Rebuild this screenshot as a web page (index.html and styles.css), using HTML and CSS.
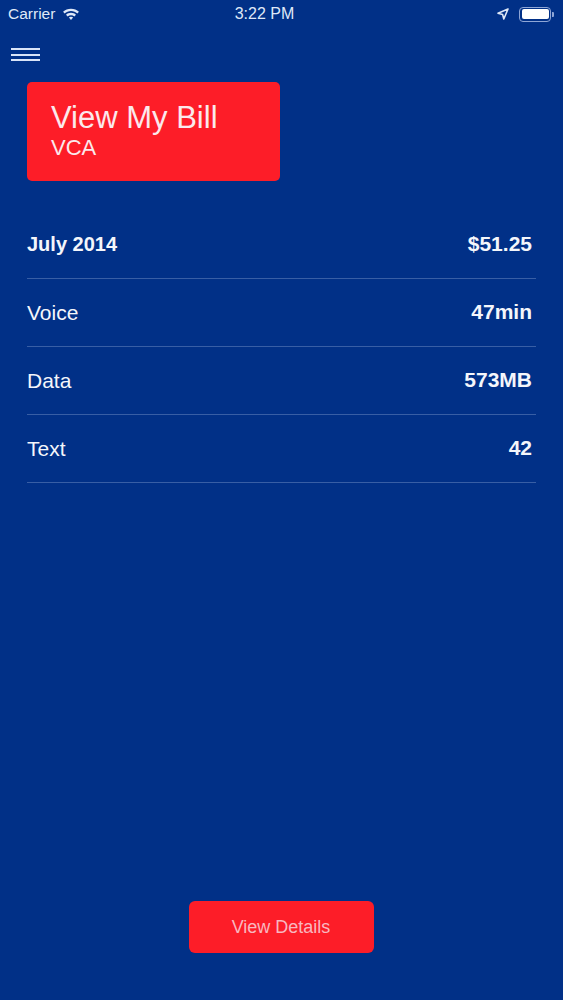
FILE: index.html
```html
<!DOCTYPE html>
<html lang="en">
<head>
  <meta charset="UTF-8" />
  <meta name="viewport" content="width=device-width, initial-scale=1.0" />
  <title>View My Bill</title>
  <link rel="stylesheet" href="styles.css">
</head>
<body>
  <div class="screen">
    <div class="status-bar">
      <div class="status-left">
        Carrier
        <svg class="wifi" width="18" height="14" viewBox="0 0 17 13">
          <path d="M8.5 1.5C5.5 1.5 3 2.6 1 4.4l1.5 1.6C4.1 4.6 6.2 3.7 8.5 3.7s4.4 .9 6 2.3L16 4.4C14 2.6 11.5 1.5 8.5 1.5z" fill="#dfe8f7"/>
          <path d="M8.5 5.4c-1.9 0-3.5 .7-4.7 1.8l1.5 1.6c.9-.8 2-1.2 3.2-1.2s2.3 .4 3.2 1.2l1.5-1.6C12 6.1 10.4 5.4 8.5 5.4z" fill="#dfe8f7"/>
          <path d="M8.5 9.1c-.8 0-1.5 .3-2 .8l2 2.2 2-2.2c-.5-.5-1.2-.8-2-.8z" fill="#dfe8f7"/>
        </svg>
      </div>
      <div class="status-time">3:22 PM</div>
      <div class="status-right">
        <svg class="arrow" width="12" height="12" viewBox="0 0 12 12">
          <path d="M11 1L1 5.2l4.6 1.2L6.8 11z" fill="none" stroke="#dfe8f7" stroke-width="1.6" stroke-linejoin="round"/>
        </svg>
        <div class="battery"><div class="battery-fill"></div></div>
        <div class="battery-cap"></div>
      </div>
    </div>

    <div class="nav">
      <div class="menu">
        <span></span><span></span><span></span>
      </div>
    </div>

    <div class="bill-card">
      <div class="bill-title">View My Bill</div>
      <div class="bill-sub">VCA</div>
    </div>

    <div class="usage">
      <div class="row row-head">
        <span>July 2014</span>
        <span class="value">$51.25</span>
      </div>
      <div class="row">
        <span>Voice</span>
        <span class="value">47min</span>
      </div>
      <div class="row">
        <span>Data</span>
        <span class="value">573MB</span>
      </div>
      <div class="row">
        <span>Text</span>
        <span class="value">42</span>
      </div>
    </div>

    <div class="footer">
      <button class="details-btn">View Details</button>
    </div>
  </div>
</body>
</html>
```

FILE: styles.css
```css
body {
  margin: 0;
  background: #013087;
  color: #f4f6fb;
  font-family: 'Liberation Sans', Arial, sans-serif;
}
.screen {
  display: flex;
  flex-direction: column;
  min-height: 100vh;
}
.status-bar {
  height: 28px;
  display: flex;
  align-items: center;
  justify-content: space-between;
  padding: 0 9px 0 8px;
  font-size: 15.5px;
  color: #dfe8f7;
  position: relative;
}
.status-left {
  display: flex;
  align-items: center;
  gap: 7px;
}
.status-time {
  position: absolute;
  left: 0;
  right: 34px;
  text-align: center;
  font-size: 16px;
}
.status-right {
  display: flex;
  align-items: center;
}
.arrow {
  margin-right: 10px;
}
.battery {
  width: 27px;
  height: 10px;
  border: 1.5px solid #8fa6d6;
  border-radius: 4px;
  padding: 1.5px;
  box-sizing: content-box;
}
.battery-fill {
  width: 100%;
  height: 100%;
  background: #fff;
  border-radius: 2px;
}
.battery-cap {
  width: 2px;
  height: 5px;
  background: #8fa6d6;
  border-radius: 0 1px 1px 0;
  margin-left: 1px;
}
.nav {
  height: 54px;
  padding-left: 11px;
}
.menu {
  width: 29px;
  padding-top: 20px;
  display: flex;
  flex-direction: column;
  gap: 3.5px;
}
.menu span {
  display: block;
  height: 2px;
  background: #d9e4f8;
}
.bill-card {
  margin-left: 27px;
  width: 253px;
  height: 99px;
  box-sizing: border-box;
  background: #fd1d28;
  border-radius: 5px;
  padding: 18px 24px 0;
  color: #fbe9ec;
}
.bill-title {
  font-size: 31px;
  line-height: 35px;
}
.bill-sub {
  font-size: 22px;
  line-height: 26px;
}
.usage {
  margin: 30px 27px 0;
}
.row {
  height: 67px;
  display: flex;
  align-items: center;
  justify-content: space-between;
  border-bottom: 1px solid rgba(160, 180, 220, 0.35);
  padding-right: 4px;
  font-size: 21px;
}
.row-head {
  font-size: 20px;
  font-weight: bold;
}
.value {
  font-size: 21px;
  font-weight: bold;
  margin-top: -2px;
}
.footer {
  margin-top: auto;
  padding-bottom: 47px;
  display: flex;
  justify-content: center;
}
.details-btn {
  width: 185px;
  height: 52px;
  background: #fd1d28;
  color: #f8b8c0;
  border: none;
  border-radius: 6px;
  font-family: 'Liberation Sans', Arial, sans-serif;
  font-size: 18px;
  margin-left: -1px;
}
```
